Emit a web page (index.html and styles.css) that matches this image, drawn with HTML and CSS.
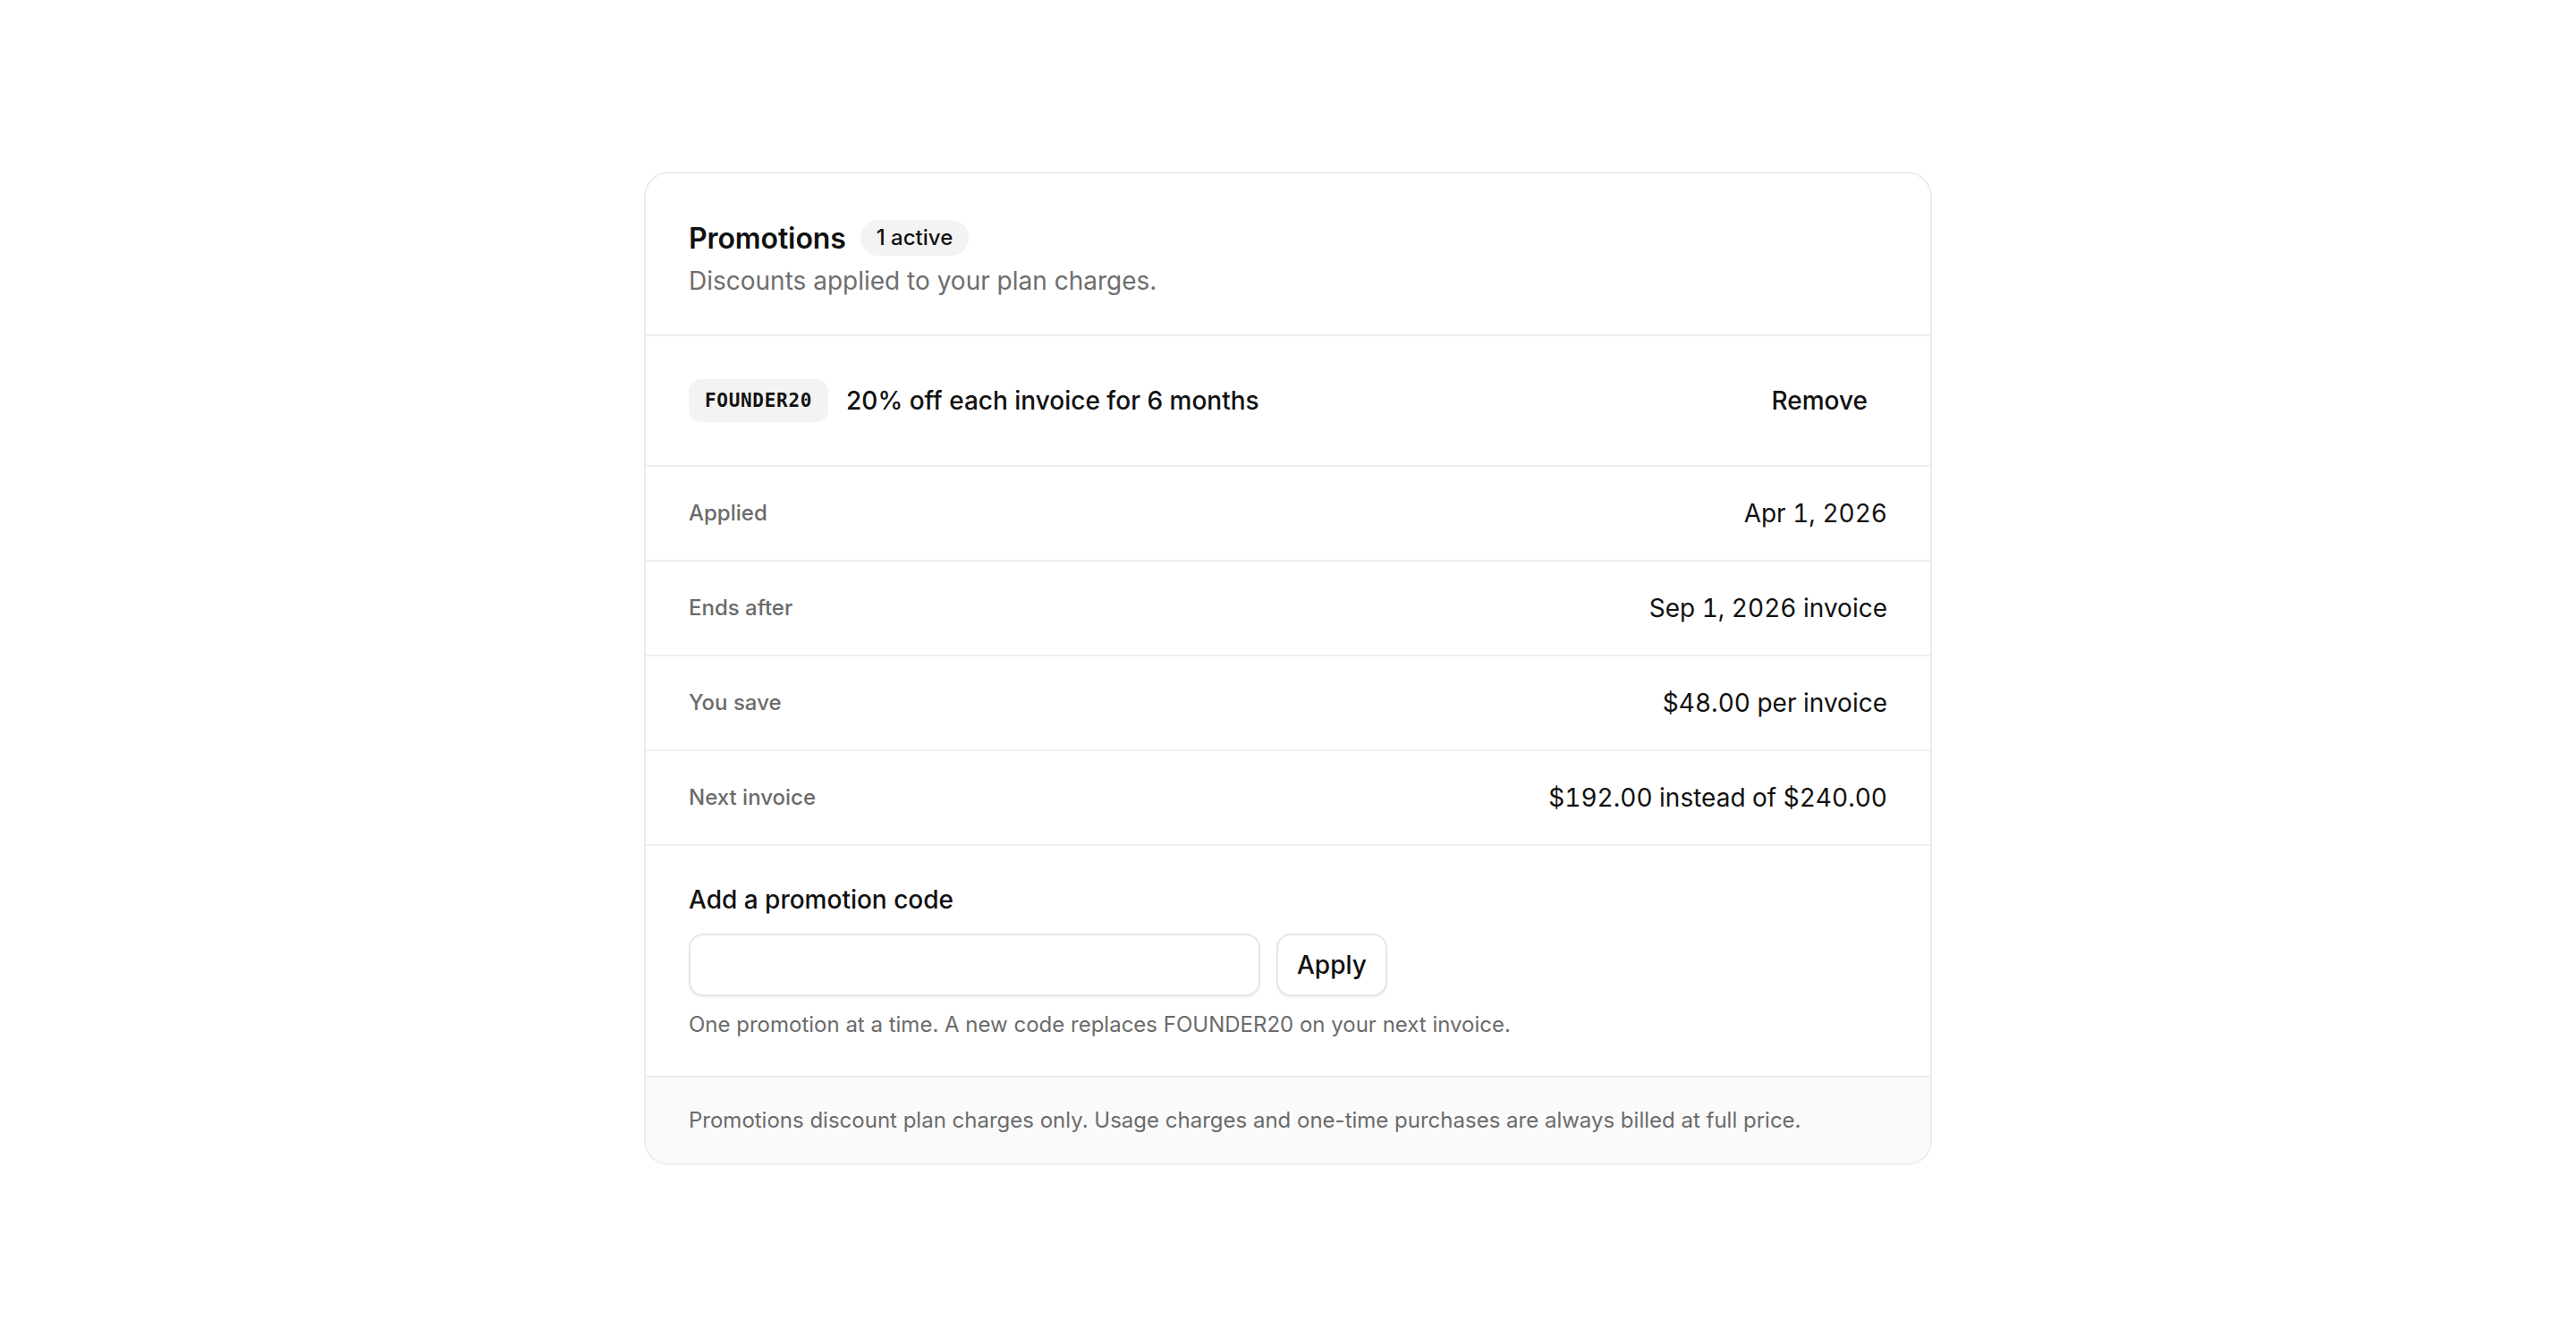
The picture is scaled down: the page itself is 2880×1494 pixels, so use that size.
FILE: index.html
```html
<!DOCTYPE html>
<html lang="en">
<head>
    <meta charset="UTF-8">
    <meta name="viewport" content="width=device-width, initial-scale=1.0">
    <title>Billing - Promotions</title>
    <link rel="stylesheet" href="styles.css">
</head>
<body>
    <main class="page">
        <!-- Promotions card -->
        <section class="card">
            <header class="card-head">
                <div class="title-row">
                    <h2>Promotions</h2>
                    <span class="badge">1 active</span>
                </div>
                <p class="subtitle">Discounts applied to your plan charges.</p>
            </header>

            <!-- Active promotion -->
            <div class="promo-row">
                <div class="promo-info">
                    <code class="promo-code">FOUNDER20</code>
                    <span class="promo-desc">20% off each invoice for 6 months</span>
                </div>
                <button class="btn-ghost">Remove</button>
            </div>

            <div class="detail-row">
                <span class="detail-label">Applied</span>
                <span class="detail-value">Apr 1, 2026</span>
            </div>
            <div class="detail-row">
                <span class="detail-label">Ends after</span>
                <span class="detail-value">Sep 1, 2026 invoice</span>
            </div>
            <div class="detail-row">
                <span class="detail-label">You save</span>
                <span class="detail-value">$48.00 per invoice</span>
            </div>
            <div class="detail-row">
                <span class="detail-label">Next invoice</span>
                <span class="detail-value">$192.00 instead of $240.00</span>
            </div>

            <!-- New code form -->
            <div class="add-code">
                <label for="promoInput" class="add-label">Add a promotion code</label>
                <div class="add-controls">
                    <input type="text" id="promoInput" class="code-input">
                    <button class="btn-outline">Apply</button>
                </div>
                <p class="hint">One promotion at a time. A new code replaces FOUNDER20 on your next invoice.</p>
            </div>

            <footer class="card-foot">
                Promotions discount plan charges only. Usage charges and one-time purchases are always billed at full price.
            </footer>
        </section>
    </main>
</body>
</html>
```

FILE: styles.css
```css
/* Page */
body {
    margin: 0;
    padding: 0;
    font-family: Inter, "Noto Sans", sans-serif;
    background: #ffffff;
    color: #111111;
}

.page {
    display: flex;
    justify-content: center;
    padding-top: 192px;
}

/* Card */
.card {
    width: 1440px;
    box-sizing: border-box;
    border: 2px solid #ececec;
    border-radius: 28px;
    overflow: hidden;
    background: #ffffff;
}

.card-head {
    padding: 48px 48px 40px;
    border-bottom: 2px solid #eeeeee;
}

.title-row {
    display: flex;
    align-items: center;
    gap: 16px;
    height: 48px;
}

.title-row h2 {
    margin: 0;
    font-size: 32px;
    font-weight: 600;
    letter-spacing: -0.1px;
}

.badge {
    display: inline-block;
    background: #f3f3f3;
    border-radius: 999px;
    padding: 0 18px;
    height: 40px;
    line-height: 40px;
    font-size: 24px;
    font-weight: 500;
}

.subtitle {
    margin: 4px 0 0;
    font-size: 28px;
    line-height: 40px;
    color: #6e6e6e;
}

/* Active promotion row */
.promo-row {
    display: flex;
    align-items: center;
    justify-content: space-between;
    padding: 38px 48px;
    border-bottom: 2px solid #eeeeee;
}

.promo-info {
    display: flex;
    align-items: center;
    gap: 20px;
}

.promo-code {
    background: #f3f3f3;
    border-radius: 14px;
    padding: 0 18px;
    height: 48px;
    line-height: 48px;
    font-family: "DejaVu Sans Mono", "Liberation Mono", monospace;
    font-size: 21px;
    font-weight: 700;
    letter-spacing: 0.7px;
}

.promo-desc {
    font-size: 28px;
    font-weight: 500;
}

.btn-ghost {
    font-family: inherit;
    font-size: 28px;
    font-weight: 500;
    line-height: 36px;
    color: #111111;
    background: none;
    border: none;
    padding: 16px 22px;
    cursor: pointer;
}

/* Detail rows */
.detail-row {
    display: flex;
    align-items: center;
    justify-content: space-between;
    padding: 33px 48px;
    line-height: 38px;
    border-bottom: 2px solid #eeeeee;
}

.detail-label {
    font-size: 24px;
    font-weight: 500;
    color: #6b6b6b;
}

.detail-value {
    font-size: 28px;
    font-variant-numeric: tabular-nums;
}

/* Add a code */
.add-code {
    padding: 42px 48px 41px;
}

.add-label {
    display: block;
    font-size: 28px;
    font-weight: 500;
    line-height: 36px;
}

.add-controls {
    display: flex;
    gap: 18px;
    margin-top: 20px;
}

.code-input {
    width: 639px;
    height: 70px;
    box-sizing: border-box;
    border: 2px solid #e6e6e6;
    border-radius: 16px;
    box-shadow: 0 2px 3px rgba(0, 0, 0, 0.05);
    font-family: inherit;
    font-size: 28px;
    padding: 0 20px;
    outline: none;
}

.btn-outline {
    height: 70px;
    padding: 0 21px;
    font-family: inherit;
    font-size: 28px;
    font-weight: 500;
    color: #111111;
    background: #ffffff;
    border: 2px solid #e6e6e6;
    border-radius: 16px;
    box-shadow: 0 2px 3px rgba(0, 0, 0, 0.05);
    cursor: pointer;
}

.hint {
    margin: 16px 0 0;
    font-size: 24px;
    line-height: 32px;
    color: #6b6b6b;
}

/* Footer note */
.card-foot {
    background: #fafafa;
    border-top: 2px solid #eeeeee;
    padding: 32px 48px;
    font-size: 24px;
    line-height: 32px;
    color: #6b6b6b;
}
```
